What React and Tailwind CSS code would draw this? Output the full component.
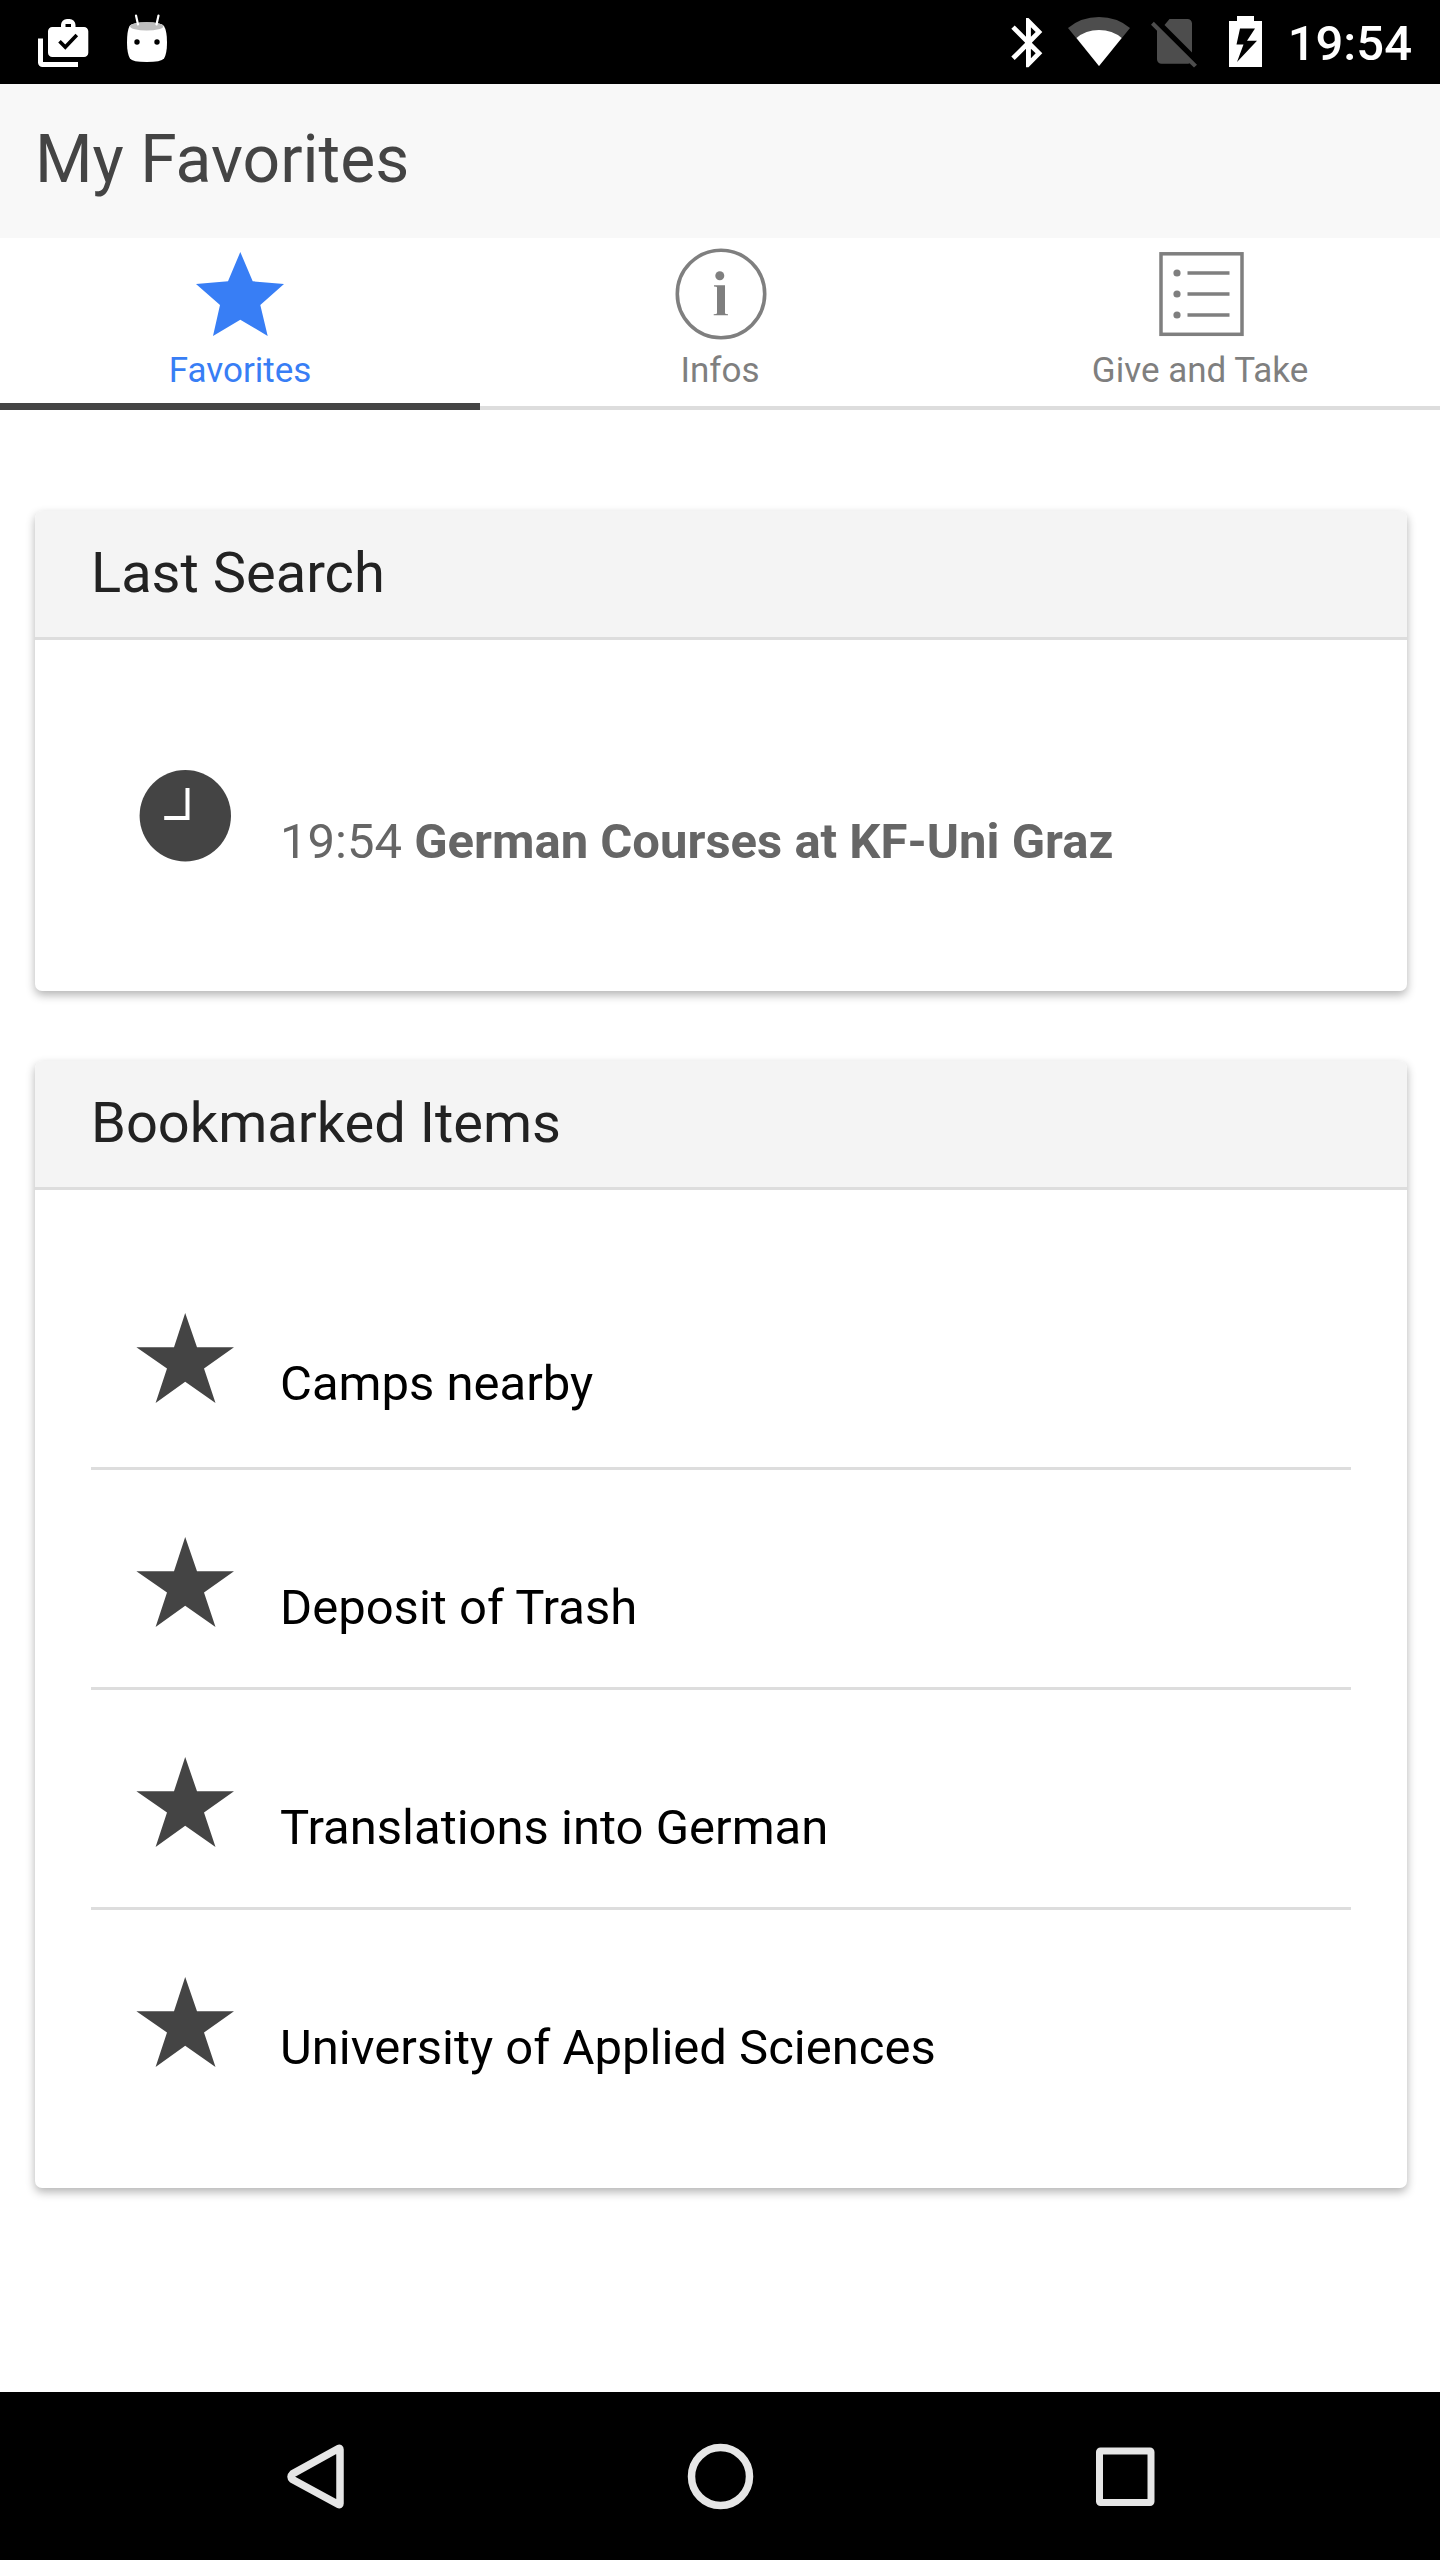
const tabs = [
  { label: "Favorites", Icon: TabStarIcon, active: true },
  { label: "Infos", Icon: InfoIcon, active: false },
  { label: "Give and Take", Icon: ListIcon, active: false },
];

const bookmarks = [
  "Camps nearby",
  "Deposit of Trash",
  "Translations into German",
  "University of Applied Sciences",
];

function TabStarIcon() {
  return (
    <svg className="h-[112px] w-[112px]" viewBox="184 238 112 112" fill="currentColor" aria-hidden="true">
      <polygon points="240.3,252 252.7,281.3 284,284 260.3,305 267.7,336 240.3,319.7 213,336 220,305 196,284 228,281.3" />
    </svg>
  );
}

function InfoIcon() {
  return (
    <svg className="h-[112px] w-[112px]" viewBox="664 238 112 112" fill="currentColor" aria-hidden="true">
      <circle cx="721" cy="294" r="43.7" fill="none" stroke="currentColor" strokeWidth="3.6" />
      <circle cx="719.8" cy="275.7" r="4.5" />
      <path d="M714 285.3h11v28q0 .9 3 .9v1.1h-14.3v-1.1q3.3 0 3.3-.9v-26q0-.8-3-.8z" />
    </svg>
  );
}

function ListIcon() {
  return (
    <svg className="h-[112px] w-[112px]" viewBox="1144 238 112 112" fill="currentColor" aria-hidden="true">
      <rect x="1161" y="253.8" width="81" height="80.5" fill="none" stroke="currentColor" strokeWidth="3.5" />
      <circle cx="1177" cy="273" r="3.6" />
      <circle cx="1177" cy="294" r="3.6" />
      <circle cx="1177" cy="315" r="3.6" />
      <path d="M1187.5 273h42M1187.5 294h42M1187.5 315h42" stroke="currentColor" strokeWidth="3.5" />
    </svg>
  );
}

function StarIcon() {
  return (
    <svg className="h-[112px] w-[112px] shrink-0" viewBox="129 1302 112 112" fill="currentColor" aria-hidden="true">
      <polygon points="185.2,1313 197,1347.3 234,1347.3 204,1368.4 215.5,1403 185.2,1381.8 155.6,1403 167,1368.4 136.4,1347.3 174,1347.3" />
    </svg>
  );
}

function ClockIcon() {
  return (
    <svg className="h-[112px] w-[112px] shrink-0" viewBox="129 760 112 112" aria-hidden="true">
      <circle cx="185.3" cy="815.8" r="45.7" fill="currentColor" />
      <path d="M187.5 788v30H164.2" fill="none" stroke="#fff" strokeWidth="4" />
    </svg>
  );
}

function StatusBar() {
  return (
    <div className="flex h-[84px] items-center justify-between bg-black pr-7 pl-9 text-white">
      <div className="flex gap-8">
        <svg className="h-[84px] w-[56px]" viewBox="36 0 56 84" aria-label="Work apps">
          <path fill="currentColor" fillRule="evenodd" d="M61 27v-2a6 6 0 0 1 6-6h2.5a6 6 0 0 1 6 6v2H84a4.300 4.300 0 0 1 4.300 4.300V52.700A4.300 4.300 0 0 1 84 57H52.300A4.300 4.300 0 0 1 48 52.700V31.300A4.300 4.300 0 0 1 52.300 27zM65.500 24v3h5.500v-3z" />
          <path fill="none" stroke="#000" strokeWidth="3.6" d="M59.500 41.300l5.800 5.800 11.500-12" />
          <path fill="currentColor" d="M38 38.500h5V62h35v5H42.500a4.500 4.500 0 0 1-4.500-4.500z" />
        </svg>
        <svg className="h-[84px] w-[44px]" viewBox="124 0 44 84" aria-label="Android">
          <path fill="currentColor" d="M129.500 26q2-3.500 17.200-3.500T164 26q3 5 3 16.500 0 11-3 16-3 3.500-17.300 3.500T130 58.500q-3-5-3-16 0-11.500 2.500-16.500z" />
          <ellipse cx="146.7" cy="26.2" rx="16.7" ry="4.3" fill="#bdbdbd" />
          <path d="M136 15.500l2 9M158.500 15.500l-2 9" stroke="currentColor" strokeWidth="2.2" strokeLinecap="round" />
          <circle cx="137" cy="42" r="2.7" fill="#000" />
          <circle cx="157" cy="42" r="2.7" fill="#000" />
        </svg>
      </div>
      <div className="flex items-center">
        <svg className="h-[84px] w-[48px]" viewBox="1008 0 48 84" aria-label="Bluetooth">
          <path fill="currentColor" fillRule="evenodd" d="M1042.300 32L1028.500 18H1026v18.700L1014.700 25.400l-3.400 3.400 13.900 13.900-13.900 13.900 3.400 3.400L1026 48.700V67.300h2.500l13.800-14-10.500-10.600zM1030.900 27.200l4.800 4.800-4.800 4.700zM1030.900 48.700l4.800 4.600-4.800 4.900z" />
        </svg>
        <svg className="h-[84px] w-[84px]" viewBox="1056 0 84 84" aria-label="Wi-Fi">
          <path fill="#4d4d4d" d="M1068 28q13-11 31-11t31 11l-31 38z" />
          <path fill="currentColor" d="M1076.500 38q9-8 22.500-8t22.700 8L1099 66z" />
        </svg>
        <svg className="h-[84px] w-[72px]" viewBox="1140 0 72 84" aria-label="No SIM card">
          <path fill="#4d4d4d" d="M1169.500 19h18a4.500 4.500 0 0 1 4.500 4.500v29l-27.500-27.500zM1153.800 21.700L1197 64.700l-3 2.900-4.500-4.400q-1.300.6-2 .6h-26a4.500 4.500 0 0 1-4.500-4.500v-28.500l-6-6.100z" />
        </svg>
        <svg className="h-[84px] w-[76px]" viewBox="1212 0 76 84" aria-label="Battery charging">
          <path fill="currentColor" d="M1237 16h17v5h8v46h-33V21h8z" />
          <path fill="#000" d="M1240 28.500h15l-8 12.300h10L1237 62l6.500-17.500h-7z" />
        </svg>
        <time className="pt-1 text-[49px] leading-[60px] font-medium">19:54</time>
      </div>
    </div>
  );
}

function Card({ title, children }) {
  return (
    <section className="overflow-hidden rounded-[7px] bg-white shadow-[0_4px_10px_rgba(0,0,0,0.3)]">
      <h2 className="border-b-3 border-[#dddddd] bg-[#f4f4f4] px-14 pt-[30px] pb-8 text-[56px] leading-[64px] text-[#222222]">
        {title}
      </h2>
      {children}
    </section>
  );
}

export default function App() {
  return (
    <div className="flex min-h-screen flex-col bg-white font-['Roboto','Liberation_Sans',sans-serif]">
      <StatusBar />
      <header className="bg-[#f8f8f8] px-[35px] pt-9 pb-[38px]">
        <h1 className="text-[66px] leading-[80px] text-[#444444]">My Favorites</h1>
      </header>
      <nav className="grid h-[172px] grid-cols-3" aria-label="Sections">
        {tabs.map(({ label, Icon, active }) => (
          <button
            key={label}
            type="button"
            aria-current={active ? "page" : undefined}
            className={
              active
                ? "flex flex-col items-center border-b-[7px] border-[#444444] text-[#387ef5]"
                : "flex flex-col items-center border-b-4 border-[#dddddd] text-[#7f7f7f]"
            }
          >
            <Icon />
            <span className="text-[35px] leading-[42px]">{label}</span>
          </button>
        ))}
      </nav>
      <main className="flex flex-1 flex-col gap-[70px] pt-[101px] pr-[33px] pb-[140px] pl-[35px]">
        <Card title="Last Search">
          <div className="px-14 pt-16 pb-[70px]">
            <a href="#search" className="flex items-end gap-[39px] pt-14 pb-[49px] pl-[38px] text-[#444444]">
              <ClockIcon />
              <span className="text-[49px] leading-[60px] text-[#666666]">
                19:54 <strong className="font-bold">German Courses at KF-Uni Graz</strong>
              </span>
            </a>
          </div>
        </Card>
        <Card title="Bookmarked Items">
          <ul className="px-14 pt-14 pb-[61px]">
            {bookmarks.map((name) => (
              <li key={name} className="border-b-3 border-[#dddddd] first:pb-1 last:border-b-0">
                <a href="#item" className="flex items-end gap-[39px] pt-14 pb-[49px] pl-[38px] text-[#444444]">
                  <StarIcon />
                  <span className="text-[49px] leading-[60px] text-black">{name}</span>
                </a>
              </li>
            ))}
          </ul>
        </Card>
      </main>
      <footer className="grid h-[168px] grid-cols-3 bg-black px-28 text-[#e6e6e6]">
        <button type="button" aria-label="Back" className="flex items-center justify-center">
          <svg className="h-[84px] w-[84px]" viewBox="273 2434 84 84" aria-hidden="true">
            <path d="M338.500 2448.500q1.500-.8 1.500 1v54q0 1.800-1.500 1L292.500 2479.500q-3-2.800 0-5.600z" fill="none" stroke="currentColor" strokeWidth="7.5" strokeLinejoin="round" />
          </svg>
        </button>
        <button type="button" aria-label="Home" className="flex items-center justify-center">
          <svg className="h-[84px] w-[84px]" viewBox="678 2434 84 84" aria-hidden="true">
            <circle cx="720.5" cy="2476.5" r="29" fill="none" stroke="currentColor" strokeWidth="7.5" />
          </svg>
        </button>
        <button type="button" aria-label="Recent apps" className="flex items-center justify-center">
          <svg className="h-[84px] w-[84px]" viewBox="1083 2434 84 84" aria-hidden="true">
            <rect x="1099.5" y="2451" width="51.5" height="51.5" rx="1" fill="none" stroke="currentColor" strokeWidth="7" strokeLinejoin="round" />
          </svg>
        </button>
      </footer>
    </div>
  );
}
